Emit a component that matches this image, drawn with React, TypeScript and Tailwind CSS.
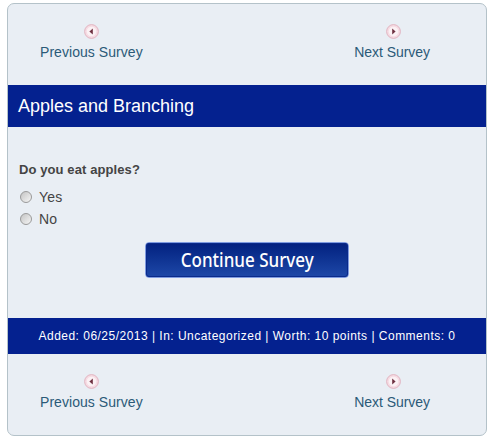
const ARIAL = "font-['Liberation_Sans',Arial,sans-serif]";

function NavArrow({ direction }: { direction: "left" | "right" }) {
  return (
    <svg width="15" height="15" viewBox="0 0 15 15" className={direction === "left" ? "block ml-[1px]" : "block ml-[2px]"}>
      <circle cx="7.5" cy="7.5" r="6.9" fill="#f6dbe3" stroke="#e0b4c0" strokeWidth="1" />
      <circle cx="7.5" cy="7.5" r="4.8" fill="#fbf1f4" />
      {direction === "left" ? (
        <path d="M8.8 4.6 L5.4 7.5 L8.8 10.4 Z" fill="#6e3040" />
      ) : (
        <path d="M6.2 4.6 L9.6 7.5 L6.2 10.4 Z" fill="#6e3040" />
      )}
    </svg>
  );
}

function SurveyNav({ className }: { className: string }) {
  return (
    <div className={`flex justify-between pl-[32px] pr-[56px] ${className}`}>
      <a className="flex flex-col items-center gap-[4px] text-[14px] leading-[18px] tracking-[0.05px] text-[#2b5a78]">
        <NavArrow direction="left" />
        Previous Survey
      </a>
      <a className="flex flex-col items-center gap-[4px] text-[14px] leading-[18px] tracking-[-0.05px] text-[#2b5a78]">
        <NavArrow direction="right" />
        Next Survey
      </a>
    </div>
  );
}

function Radio({ label }: { label: string }) {
  return (
    <label className="flex items-center gap-[7px] pl-[1px] h-[22px] text-[14px] text-[#444] tracking-[0.2px]">
      <span className="w-[12px] h-[12px] rounded-full border border-[#9a9a9a] bg-gradient-to-br from-[#c4c4c4] to-[#f6f6f6]" />
      {label}
    </label>
  );
}

export default function App() {
  return (
    <div className={`w-[490px] h-[439px] bg-white pt-[3px] pl-[7px] ${ARIAL}`}>
      <div className="w-[480px] h-[433px] flex flex-col rounded-[7px] border border-[#b4c2c9] bg-[#e9eef4] overflow-hidden">
        <SurveyNav className="pt-[20px] h-[81px] shrink-0" />

        <h1 className="h-[42px] shrink-0 flex items-center pl-[10px] bg-[#04218f] text-white text-[18px] font-normal">
          Apples and Branching
        </h1>

        <div className="h-[191px] shrink-0 pt-[34px] pl-[11px]">
          <p className="text-[13px] leading-[18px] tracking-[0.1px] font-bold text-[#444] mb-[7px]">Do you eat apples?</p>
          <Radio label="Yes" />
          <Radio label="No" />
          <div className="flex justify-center mt-[12px] pr-[11px]">
            <button className="w-[204px] h-[36px] rounded-[4px] border border-[#7f9be0] outline outline-1 outline-[#0a2a8a] -outline-offset-2 bg-gradient-to-b from-[#04207f] to-[#1e48a8] text-white text-[20px] font-medium font-['Noto_Sans',sans-serif]">
              <span className="inline-block scale-x-[0.85] whitespace-nowrap">Continue Survey</span>
            </button>
          </div>
        </div>

        <div className="h-[36px] shrink-0 flex items-center justify-center bg-[#04218f] text-white text-[12px] tracking-[0.48px]">
          Added: 06/25/2013 | In: Uncategorized | Worth: 10 points | Comments: 0
        </div>

        <SurveyNav className="pt-[20px]" />
      </div>
    </div>
  );
}
